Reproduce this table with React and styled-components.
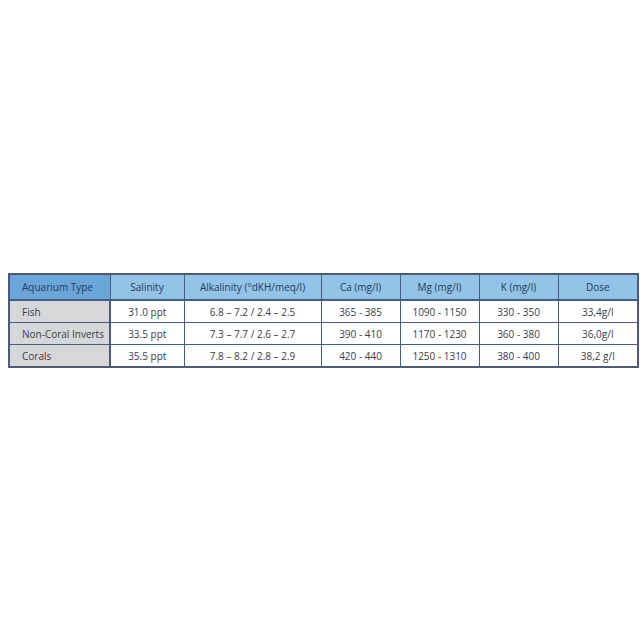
import React from 'react';
import styled, { createGlobalStyle } from 'styled-components'

const GlobalStyle = createGlobalStyle`
    body {
        margin: 0;
        background: #ffffff;
        font-family: "Open Sans", "Noto Sans", sans-serif;
    }
`

const columns = [
    { label: 'Aquarium Type', width: 101 },
    { label: 'Salinity', width: 74 },
    { label: 'Alkalinity (°dKH/meq/l)', width: 137 },
    { label: 'Ca (mg/l)', width: 79 },
    { label: 'Mg (mg/l)', width: 79 },
    { label: 'K (mg/l)', width: 79 },
    { label: 'Dose', width: 80 },
]

const rows = [
    ['Fish', '31.0 ppt', '6.8 – 7.2 / 2.4 – 2.5', '365 - 385', '1090 - 1150', '330 - 350', '33,4g/l'],
    ['Non-Coral Inverts', '33.5 ppt', '7.3 – 7.7 / 2.6 – 2.7', '390 - 410', '1170 - 1230', '360 - 380', '36,0g/l'],
    ['Corals', '35.5 ppt', '7.8 – 8.2 / 2.8 – 2.9', '420 - 440', '1250 - 1310', '380 - 400', '38,2 g/l'],
]

export default function App() {
    return (
        <>
            <GlobalStyle />
            <Page>
                <Table>
                    <colgroup>
                        {columns.map((c, i) => <col key={i} style={{ width: c.width }} />)}
                    </colgroup>
                    <thead>
                        <tr>
                            {columns.map((c, i) => (
                                <TH key={i} $first={i === 0}>{c.label}</TH>
                            ))}
                        </tr>
                    </thead>
                    <tbody>
                        {rows.map((row, r) => (
                            <tr key={r}>
                                {row.map((cell, i) => (
                                    <TD key={i} $first={i === 0}>{cell}</TD>
                                ))}
                            </tr>
                        ))}
                    </tbody>
                </Table>
            </Page>
        </>
    )
}

const Page = styled.div`
    width: 640px;
    height: 640px;
    padding: 273px 0 0 8px;
    box-sizing: border-box;
`
const Table = styled.table`
    width: 629px;
    table-layout: fixed;
    border-collapse: collapse;
    border: 2px solid #4b5b7e;
    font-size: 10px;
`
const TH = styled.th`
    height: 24px;
    padding: 0 0 0 ${p => p.$first ? '12px' : '0'};
    text-align: ${p => p.$first ? 'left' : 'center'};
    font-weight: 400;
    color: #283a5c;
    background: ${p => p.$first ? '#6ba6d8' : '#92c4e8'};
    border: 1px solid #4b5b7e;
    border-bottom-width: 2px;
    white-space: nowrap;
`
const TD = styled.td`
    height: 21px;
    padding: 0 0 0 ${p => p.$first ? '12px' : '0'};
    text-align: ${p => p.$first ? 'left' : 'center'};
    color: #3a3d44;
    background: ${p => p.$first ? '#d6d7d9' : '#ffffff'};
    border: 1px solid #4b5b7e;
    border-right-width: ${p => p.$first ? '2px' : '1px'};
    white-space: nowrap;
`
